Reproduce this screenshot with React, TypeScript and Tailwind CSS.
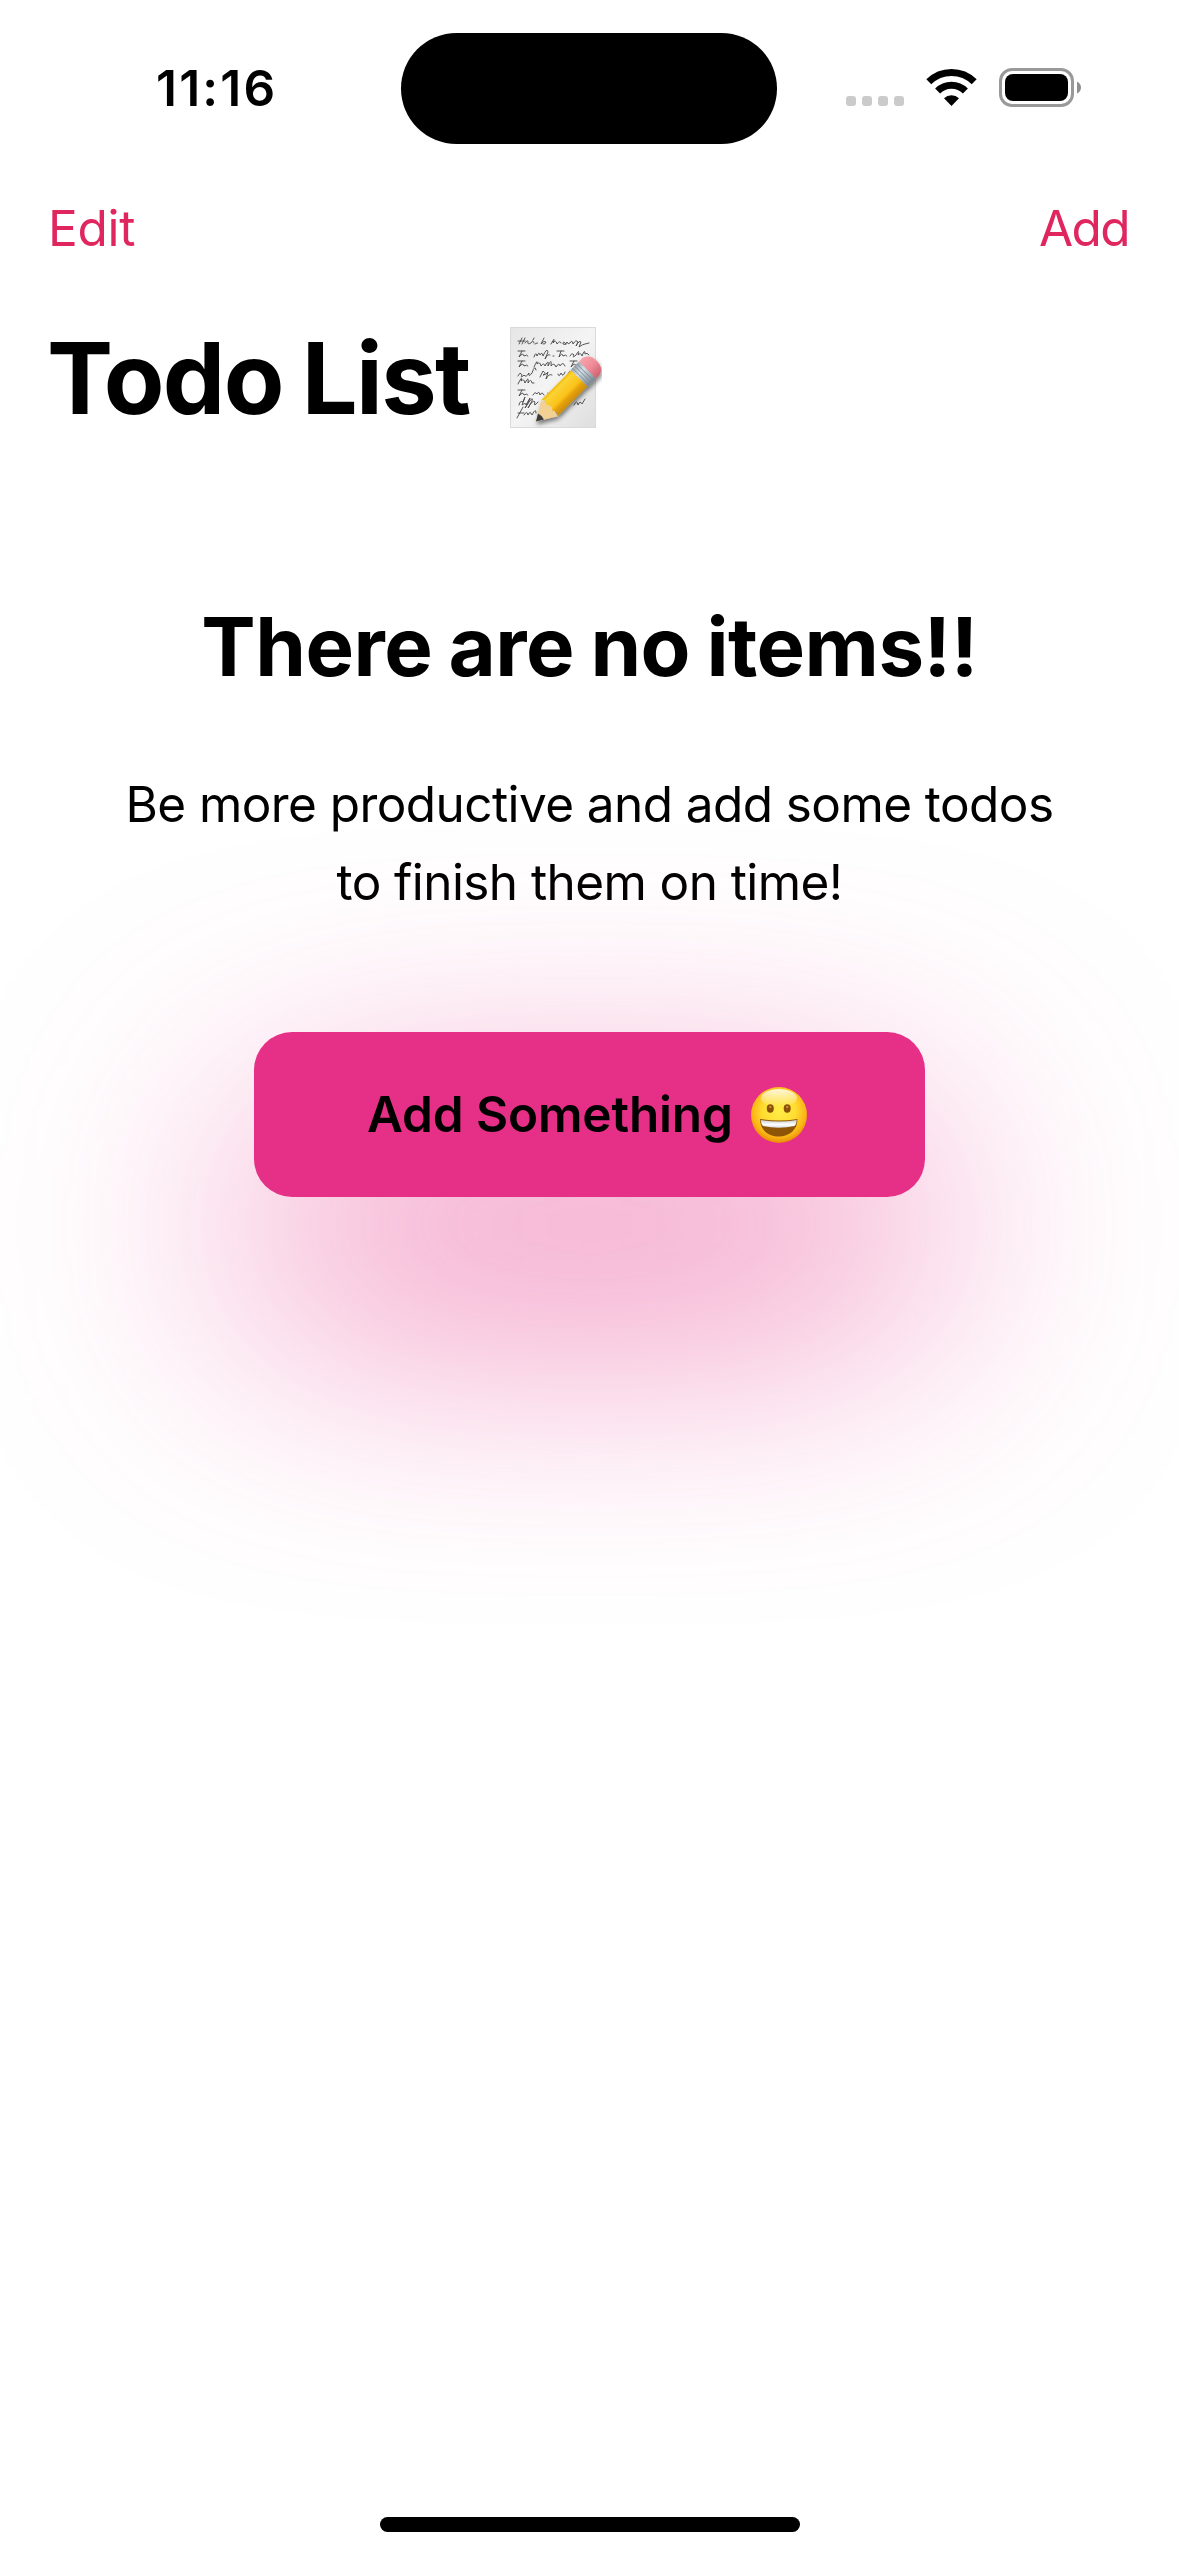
const paperLines = [
  'M9 17 l3 -6 M8 14 h7 M15 11 l-3 6 M15 16 q3 -4 3 -1 q-1 3 3 1 q2 -4 3 0 M24 11 l-1 2 M25 17 q3 -2 3 -1 M34 11 l-3 6 q3 -4 5 -2 q-1 3 -3 2 M41 17 q5 -9 2 -1 q3 -4 4 1 q3 -4 4 -1 M56 17 q-3 -4 -3 0 q3 2 4 -2 q1 3 3 1 q2 -4 3 1 q3 -5 5 -2 l-2 4 q3 -6 5 -4 l-2 5 q4 -3 6 -3 l4 -1',
  'M8 24 h7 M12 24 l-3 6 q4 -5 5 -1 q3 -2 4 0 M24 30 q2 -6 3 -1 q2 -5 3 -1 q2 -4 3 1 q4 -9 5 -4 l-3 7 q3 -6 5 -4 M43 29 l1 0 M47 24 h7 M51 24 l-2 6 q3 -5 4 -1 q3 -2 4 0 M60 29 q2 -4 4 -1 q-2 4 2 0 q4 -7 2 0 q3 -3 4 1 q3 -8 3 -2 q2 -2 4 1',
  'M8 34 h7 M12 34 l-3 6 q4 -5 5 -1 q3 -2 4 0 M24 40 q4 -9 3 -3 q3 -3 4 2 q3 -4 4 0 q4 -8 3 0 q4 -9 3 0 q3 -4 5 1 q3 -5 4 -1 q3 -5 5 0 M60 34 h7 M64 34 l-3 6 q4 -5 5 -1 q3 -2 4 0',
  'M8 49 q2 -5 4 -1 q-2 4 2 0 q2 3 5 -2 q-1 5 3 0 q3 -9 4 -3 M30 50 l3 -6 q4 3 0 4 q3 0 5 -3 l-2 7 q3 -6 6 -4 M48 47 q1 4 3 -1 q2 5 4 -1 M57 49 q4 -9 4 -2',
  'M8 57 q5 -10 3 -3 q3 -3 4 2 q4 -8 3 0 q3 -5 4 0 l2 0',
  'M8 63 h7 M12 63 l-3 6 q4 -5 5 -1 q3 -2 4 0 M23 68 q2 -4 4 -1 q2 -4 3 1 q2 -4 4 0 M38 66 q1 5 3 0 q2 5 4 -1',
  'M9 78 q1 -5 4 -3 l2 -5 l-3 8 q4 -3 4 0 q7 -13 2 -2 l-3 5 q9 -14 7 -7 l-4 7 q5 -9 7 -6 q-2 6 3 0 M64 78 q3 -6 4 0 q2 -5 4 -1 l3 -5',
  'M7 91 l6 -11 M8 86 h6 M14 88 q3 -5 4 0 q2 -5 4 0 q4 -8 4 -2 M29 88 q3 -5 4 -1 q-3 4 -4 1',
];

function MemoEmoji() {
  return (
    <svg viewBox="0 0 92 102" className="h-[102px] w-[92px]" role="img" aria-label="memo">
      <defs>
        <linearGradient id="paper" x1="0" y1="0" x2="1" y2="1">
          <stop offset="0" stopColor="#e6e6e6" />
          <stop offset="0.5" stopColor="#f4f4f4" />
          <stop offset="1" stopColor="#dedede" />
        </linearGradient>
        <linearGradient id="wood" x1="0" y1="0" x2="0" y2="1">
          <stop offset="0" stopColor="#f3b90f" />
          <stop offset="0.15" stopColor="#fbd434" />
          <stop offset="0.6" stopColor="#f9c119" />
          <stop offset="0.72" stopColor="#e9a50c" />
          <stop offset="1" stopColor="#cb8c0a" />
        </linearGradient>
        <linearGradient id="ferrule" x1="0" y1="0" x2="0" y2="1">
          <stop offset="0" stopColor="#9aa5ae" />
          <stop offset="0.35" stopColor="#d3dfe8" />
          <stop offset="1" stopColor="#7b8790" />
        </linearGradient>
        <linearGradient id="rubber" x1="0" y1="0" x2="0" y2="1">
          <stop offset="0" stopColor="#f7a3ab" />
          <stop offset="0.5" stopColor="#f08c97" />
          <stop offset="1" stopColor="#cf6070" />
        </linearGradient>
        <filter id="pencilShadow" x="-20%" y="-20%" width="140%" height="140%">
          <feDropShadow dx="1" dy="3" stdDeviation="2" floodOpacity="0.5" />
        </filter>
      </defs>
      <rect x="0.5" y="0.5" width="85" height="100" fill="url(#paper)" stroke="#dadada" />
      <g fill="none" stroke="#444" strokeWidth="0.9" strokeLinecap="round" strokeLinejoin="round">
        {paperLines.map((d) => (
          <path key={d} d={d} />
        ))}
      </g>
      <g filter="url(#pencilShadow)">
        <g transform="translate(26 94.500) rotate(-45)">
          <path d="M0 0 L19 -11.500 L22 0 L19 11.500 Z" fill="#f3d093" />
          <path d="M0 0 L7 -4.200 Q8.500 0 7 4.200 Z" fill="#3a3a3a" />
          <path d="M19 -11.500 H62 V11.500 H19 Q23 7.500 19 4 Q24 0 19 -4 Q23 -7.500 19 -11.500 Z" fill="url(#wood)" />
          <rect x="61" y="-12" width="12" height="24" fill="url(#ferrule)" />
          <path d="M63.500 -12 V12 M66.500 -12 V12 M69.500 -12 V12" stroke="#7d8993" strokeWidth="0.900" />
          <path d="M73 -12 H78 Q86 -9.500 86 0 Q86 9.500 78 12 H73 Z" fill="url(#rubber)" />
        </g>
      </g>
    </svg>
  );
}

function GrinEmoji() {
  return (
    <svg viewBox="0 0 56 56" className="size-[56px]" role="img" aria-label="grinning face">
      <defs>
        <radialGradient id="face" cx="0.5" cy="0.42" r="0.6">
          <stop offset="0" stopColor="#ffee48" />
          <stop offset="0.5" stopColor="#ffdc30" />
          <stop offset="0.8" stopColor="#fab416" />
          <stop offset="1" stopColor="#e58204" />
        </radialGradient>
        <linearGradient id="gloss" x1="0" y1="0" x2="0" y2="1">
          <stop offset="0" stopColor="#fff" stopOpacity="0.85" />
          <stop offset="1" stopColor="#fff" stopOpacity="0" />
        </linearGradient>
        <linearGradient id="teeth" x1="0" y1="0" x2="0" y2="1">
          <stop offset="0" stopColor="#c9ced6" />
          <stop offset="0.6" stopColor="#ffffff" />
          <stop offset="1" stopColor="#d5d9e0" />
        </linearGradient>
      </defs>
      <circle cx="28" cy="28" r="28" fill="url(#face)" />
      <ellipse cx="28" cy="11" rx="18" ry="9" fill="url(#gloss)" />
      <ellipse cx="19.300" cy="21.500" rx="3.500" ry="4.200" fill="#8a5008" />
      <ellipse cx="36.200" cy="21.500" rx="3.500" ry="4.200" fill="#8a5008" />
      <circle cx="19.300" cy="20" r="1.200" fill="#c58a35" />
      <circle cx="36.200" cy="20" r="1.200" fill="#c58a35" />
      <path d="M9 32 Q28 35 46.500 32 C46.500 43 38 49.500 28 49.500 C17.500 49.500 9 43 9 32 Z" fill="#8d5505" />
      <path d="M9.700 33 Q28 36 45.800 33 Q45.500 37 43.500 39 Q28 42.500 12 39 Q10 37 9.700 33 Z" fill="url(#teeth)" />
    </svg>
  );
}

function StatusIcons() {
  return (
    <svg viewBox="0 0 236 40" className="h-[40px] w-[236px]" aria-hidden="true">
      <g fill="#cbcbcb">
        <rect x="0" y="28" width="10" height="10" rx="3" />
        <rect x="16" y="28" width="10" height="10" rx="3" />
        <rect x="32" y="28" width="10" height="10" rx="3" />
        <rect x="48" y="28" width="10" height="10" rx="3" />
      </g>
      <g fill="none" stroke="#000" strokeWidth="7">
        <path d="M82.800 13.700 A32.300 32.300 0 0 1 128.200 13.700" />
        <path d="M91.600 23 A19.600 19.600 0 0 1 119.400 23" />
      </g>
      <path d="M105.500 38 L98 30.200 A10.700 10.700 0 0 1 113 30.200 Z" />
      <rect x="154.500" y="1.500" width="72" height="36" rx="11.500" fill="none" stroke="#999" strokeWidth="3" />
      <rect x="159" y="6" width="63" height="27" rx="8" />
      <path d="M231 13.500 Q235 15.500 235 19.500 Q235 23.500 231 25.500 Z" fill="#8f8f8f" />
    </svg>
  );
}

export default function App() {
  return (
    <div className="flex h-[2556px] w-[1179px] flex-col overflow-hidden bg-white font-['Inter',sans-serif] text-black">
      <header className="grid h-[176px] shrink-0 grid-cols-[401px_376px_1fr] items-center">
        <time className="pl-[156px] text-[49.5px] leading-[60px] font-semibold tracking-[2.2px]">11:16</time>
        <div className="mt-px h-[111px] rounded-full bg-black" />
        <div className="pl-[69px]"><StatusIcons /></div>
      </header>
      <nav className="flex h-[104px] shrink-0 items-center justify-between pr-[50px] pl-[48px] text-[49.5px] leading-[60px] text-[#e0265f]">
        <button className="tracking-[-0.3px]">Edit</button>
        <button className="tracking-[-1.6px]">Add</button>
      </nav>
      <h1 className="flex h-[196px] shrink-0 items-center pl-[47px] text-[99px] leading-[120px] font-bold tracking-[-1.6px] [word-spacing:-3px]">
        Todo List
        <span className="ml-[40px]"><MemoEmoji /></span>
      </h1>
      <main className="flex flex-1 flex-col items-center pt-[121px]">
        <h2 className="text-[81.5px] leading-[100px] font-bold tracking-[-0.5px] [word-spacing:-2.5px]">There are no items!!</h2>
        <p className="mt-[68px] text-center text-[49.5px] leading-[78px] tracking-[-0.58px]">
          Be more productive and add some todos<br />to finish them on time!
        </p>
        <div className="relative isolate mt-[111px] h-[165px] w-[671px]">
          <div className="absolute inset-0 top-[110px] -z-10 h-[165px] rounded-[38px] bg-[#e62f86]/70 blur-[136px]" />
          <button className="flex size-full items-center rounded-[38px] bg-[#e62f86] pl-[113px] text-[49.5px] font-semibold tracking-[-0.15px]">
            Add Something<span className="ml-[18px]"><GrinEmoji /></span>
          </button>
        </div>
      </main>
      <div className="mx-auto mb-[24px] h-[15px] w-[420px] shrink-0 rounded-full bg-black" />
    </div>
  );
}
